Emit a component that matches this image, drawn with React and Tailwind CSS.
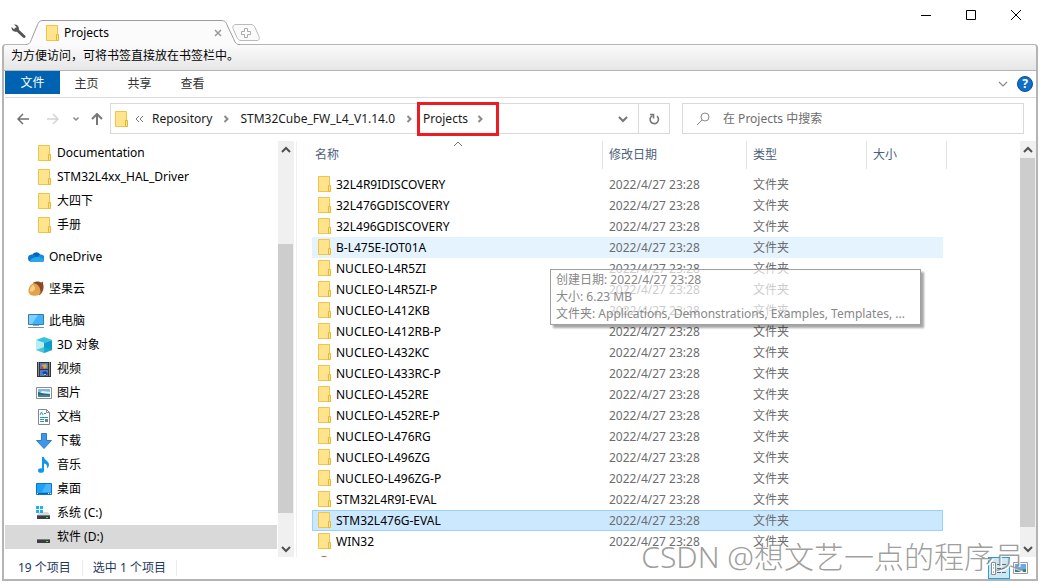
import React, { useState } from "react";

const treeGroups = [
  {
    items: [
      { name: "Documentation", icon: "folder" },
      { name: "STM32L4xx_HAL_Driver", icon: "folder" },
      { name: "大四下", icon: "folder" },
      { name: "手册", icon: "folder" },
    ],
  },
  { root: { name: "OneDrive", icon: "cloud" }, items: [] },
  { root: { name: "坚果云", icon: "nut" }, items: [] },
  {
    root: { name: "此电脑", icon: "pc" },
    items: [
      { name: "3D 对象", icon: "cube" },
      { name: "视频", icon: "video" },
      { name: "图片", icon: "picture" },
      { name: "文档", icon: "document" },
      { name: "下载", icon: "download" },
      { name: "音乐", icon: "music" },
      { name: "桌面", icon: "desktop" },
      { name: "系统 (C:)", icon: "systemDrive" },
      { name: "软件 (D:)", icon: "drive" },
    ],
  },
];

const folders = [
  "32L4R9IDISCOVERY",
  "32L476GDISCOVERY",
  "32L496GDISCOVERY",
  "B-L475E-IOT01A",
  "NUCLEO-L4R5ZI",
  "NUCLEO-L4R5ZI-P",
  "NUCLEO-L412KB",
  "NUCLEO-L412RB-P",
  "NUCLEO-L432KC",
  "NUCLEO-L433RC-P",
  "NUCLEO-L452RE",
  "NUCLEO-L452RE-P",
  "NUCLEO-L476RG",
  "NUCLEO-L496ZG",
  "NUCLEO-L496ZG-P",
  "STM32L4R9I-EVAL",
  "STM32L476G-EVAL",
  "WIN32",
];

function FolderIcon() {
  return (
    <svg width="14" height="16" viewBox="0 0 14 16" className="shrink-0">
      <path d="M.5.5h11v15H.5z" fill="#ffe48d" stroke="#ecc54a" />
      <path d="M10.5 9.5h2v6h-2z" fill="#ffe48d" stroke="#e6b730" />
    </svg>
  );
}

function DriveBody() {
  return (
    <>
      <path d="M3 7h9l2 3H1z" fill="#d9dadc" />
      <path d="M1 10h13v4H1z" fill="#3b3d40" />
      <path d="M1 10h13v1H1z" fill="#77797c" />
      <path d="M10 12h2v1h-2z" fill="#4be04b" />
    </>
  );
}

const treeIcons = {
  cloud: (
    <>
      <path d="M4 7a4.500 4.500 0 0 1 8.500-1L9 11z" fill="#0364b8" />
      <path d="M3.500 13A3.500 3.500 0 0 1 4 5.500c2 0 3 .8 4.500 2.500L6 13z" fill="#0f78d4" />
      <path d="M12 5.500A3.600 3.600 0 0 1 13.500 13L8 9z" fill="#1490df" />
      <path d="M2 13c-1-2.500 4-5 7-5 3 0 6.500 2 7 3.500-.3 1-1 1.500-2 1.500z" fill="#28a8ea" />
    </>
  ),
  nut: (
    <>
      <path d="M5 2c2-2 6-2 8-.5l2-.8v2c1.500 4 0 9-3.500 11.500z" fill="#8a4a26" />
      <path d="M5.500 2.300C9 2.500 13 6 12.500 12c-2 3-7 3.500-10 2C0 12 0 9 1 7c1-2.500 2-4 4.500-4.700z" fill="#e3a24a" />
      <path d="M5 4C3 5 1.500 8 2 10.500c2 1 5-1 5-3C7 6 6.500 4.500 5 4z" fill="#f8cf82" />
    </>
  ),
  pc: (
    <>
      <path d="M.5 1.500h15v10H.5z" fill="#3fb4fb" stroke="#3a7ba8" />
      <path d="M1 2h9L4 11H1z" fill="#7fd0ff" />
      <path d="M5 12h6v1H5z" fill="#8fa9bb" />
      <path d="M0 14h16v1H0z" fill="#6f93ac" />
    </>
  ),
  cube: (
    <>
      <path d="M0 3l8-3 8 3-8 3z" fill="#34c3d8" />
      <path d="M0 3l8 3v10l-8-3z" fill="#b9eef1" />
      <path d="M16 3L8 6v10l8-3z" fill="#0b9bd0" />
      <path d="M8 10l8 3-8 3-8-3z" fill="#22b2cf" opacity=".7" />
    </>
  ),
  video: (
    <>
      <path d="M1 1h14v15H1z" fill="#333" />
      <path d="M4 2h8v6H4zM4 9h8v6H4z" fill="#4c7fd0" />
      <path d="M6 4l4-1 1 3-3 2-2-1z" fill="#d8b02c" />
      <path d="M5 6l2-1 1 3H5z" fill="#c6475a" />
      <path d="M6 11l4-1 2 3-3 2z" fill="#20419a" />
      <path d="M8 13h2v1H8z" fill="#e5c43e" />
      <path d="M2.500 1.500v14M13.500 1.500v14" stroke="#eee" strokeDasharray="1 1" />
    </>
  ),
  picture: (
    <>
      <path d="M.5 2.500h15v11H.5z" fill="#fff" stroke="#8d8d8d" />
      <path d="M2 4h12v8H2z" fill="#7db8ee" />
      <path d="M6 6l8 1v2L4 8z" fill="#e7f2fa" />
      <path d="M2 7c4 1 7 2 12 2v1H2z" fill="#2f6f55" />
      <path d="M2 10h12v2H2z" fill="#3e83ae" />
    </>
  ),
  document: (
    <>
      <path d="M2.500.5h8l3 3v12h-11z" fill="#fff" stroke="#878787" />
      <path d="M10.500.5v3h3" fill="none" stroke="#878787" />
      <path d="M4 6l1.500-3L7 6M8 4.500h2M4 8.500h8M4 10.500h4M4 12.500h4" fill="none" stroke="#2795c9" />
      <path d="M9 10h3v3H9z" fill="#5a9179" />
    </>
  ),
  download: <path d="M5.500.5h5v7h5L8 15.500.5 7.500h5z" fill="#3f95e6" stroke="#2d7ccc" />,
  music: (
    <>
      <ellipse cx="5" cy="13.500" rx="3" ry="2.300" fill="#0f97ec" />
      <path d="M6 0h2c0 3 5 4 5 7.500 0 2-1 3-2 4 .6-3-.5-4.500-3-5V14H6z" fill="#0f97ec" />
    </>
  ),
  desktop: (
    <>
      <path d="M.5 2.500h15v11H.5z" fill="#1ba1fb" stroke="#1173bd" />
      <path d="M10 3h5v8h-9z" fill="#45b5ff" />
      <path d="M1 12h14v1H1z" fill="#0c5d9e" />
      <path d="M1 12h1v1H1zM12 12h1v1h-1zM14 12h1v1h-1z" fill="#fff" />
    </>
  ),
  systemDrive: (
    <>
      <DriveBody />
      <path d="M0 1h3v3H0zM4 1h3v3H4zM0 5h3v3H0zM4 5h3v3H4z" fill="#16b6ea" />
    </>
  ),
  drive: <DriveBody />,
};

function TreeIcon({ name }) {
  if (name === "folder") {
    return (
      <span className="flex w-4 shrink-0 justify-center pl-px">
        <FolderIcon />
      </span>
    );
  }
  return (
    <svg width="16" height="16" viewBox="0 0 16 16" className="shrink-0">
      {treeIcons[name]}
    </svg>
  );
}

function TreeItem({ item, nested, active, onSelect }) {
  return (
    <li>
      <button
        onClick={() => onSelect(item.name)}
        className={`flex h-6 w-full items-center gap-[5px] text-left ${nested ? "pl-[31px]" : "pl-[23px]"} ${
          active ? "bg-[#d9d9d9]" : ""
        }`}
      >
        <TreeIcon name={item.icon} />
        {item.name}
      </button>
    </li>
  );
}

function Chevron({ direction = "down", className = "" }) {
  const paths = {
    down: "M1 3l4 4 4-4",
    up: "M1 7l4-4 4 4",
    right: "M3.500 2L6.500 5 3.500 8",
  };
  return (
    <svg width="10" height="10" viewBox="0 0 10 10" className={className}>
      <path d={paths[direction]} fill="none" stroke="currentColor" strokeWidth="2" />
    </svg>
  );
}

function ScrollBar({ thumb }) {
  return (
    <div className="flex w-4 shrink-0 flex-col bg-[#f0f0f0] text-[#505050]">
      <button aria-label="向上滚动" className="flex h-[17px] items-center justify-center">
        <Chevron direction="up" />
      </button>
      <div className={`flex min-h-0 flex-1 flex-col pr-px ${thumb}`}>
        <div className="min-h-0 flex-1 bg-[#cdcdcd]" />
      </div>
      <button aria-label="向下滚动" className="flex h-[17px] items-center justify-center">
        <Chevron />
      </button>
    </div>
  );
}

function TitleBar() {
  return (
    <header className="relative z-10 flex h-11 shrink-0 justify-between">
      <div className="flex items-end">
        <button aria-label="设置" className="flex h-7 w-6 pl-[9px] pt-[8px]">
          <svg width="15" height="15" viewBox="0 0 15 15" className="shrink-0">
            <path d="M5 5l8 7.500" stroke="#555" strokeWidth="3" strokeLinecap="round" />
            <path d="M3 .5L5.500 3 5 4.800 3 5.200.6 3C.2 5.500 2 7.700 4.300 7.700 7 7.800 8 6 7.900 4 7.700 1.800 5.500 0 3 .5z" fill="#555" />
          </svg>
        </button>
        <div className="relative -mb-px flex h-[25px] w-[214px] items-center pl-[20px] pr-[18px] pt-px">
          <svg width="214" height="25" viewBox="0 0 214 25" className="absolute inset-0">
            <path d="M0 24.500C4 24 4.500 22 6 18L11 6C12.500 2 13.500.5 17 .5h178c4 0 5 1.500 6.500 5.500l6 12.500c1.500 4 2.500 6 6.500 6V25H0z" fill="#fbfbfb" />
            <path d="M0 24.500C4 24 4.500 22 6 18L11 6C12.500 2 13.500.5 17 .5h178c4 0 5 1.500 6.500 5.500l6 12.500c1.500 4 2.500 6 6.500 6" fill="none" stroke="#9c9c9c" />
          </svg>
          <span className="relative flex flex-1 items-center gap-1">
            <FolderIcon />
            Projects
          </span>
          <button aria-label="关闭标签页" className="relative">
            <svg width="8" height="8" viewBox="0 0 8 8">
              <path d="M1 1l6 6M7 1L1 7" stroke="#999" strokeWidth="1.500" />
            </svg>
          </button>
        </div>
        <button aria-label="新建标签页" className="-ml-2 pb-[3px]">
          <svg width="28" height="17" viewBox="0 0 28 17">
            <path d="M4 .5h15c2 0 3 1 4 3l4 9c.8 2.500 0 4-2 4H9c-2 0-3-1-4-3l-4-9C.3 2 1.500.5 4 .5z" fill="#fafafa" stroke="#bbb" />
            <path d="M12.500 4.500h3v3h3v3h-3v3h-3v-3h-3v-3h3z" fill="#fff" stroke="#aaa" />
          </svg>
        </button>
      </div>
      <div className="flex h-[30px]">
        <button aria-label="最小化" className="flex w-[45px] items-center justify-center">
          <svg width="10" height="10" viewBox="0 0 10 10">
            <path d="M0 5.500h10" stroke="#000" />
          </svg>
        </button>
        <button aria-label="最大化" className="flex w-[45px] items-center justify-center">
          <svg width="10" height="10" viewBox="0 0 10 10">
            <path d="M.5.5h9v9h-9z" fill="none" stroke="#000" />
          </svg>
        </button>
        <button aria-label="关闭" className="flex w-[45px] items-center justify-center">
          <svg width="10" height="10" viewBox="0 0 10 10">
            <path d="M0 0l10 10M10 0L0 10" stroke="#000" />
          </svg>
        </button>
      </div>
    </header>
  );
}

function Ribbon() {
  return (
    <nav className="flex h-[27px] shrink-0 items-start border-b border-[#dadbdc] text-[#333]">
      <button className="h-[23px] w-[55px] bg-[#0063b1] text-white">文件</button>
      <button className="h-[25px] w-[53px]">主页</button>
      <button className="h-[25px] w-[53px]">共享</button>
      <button className="h-[25px] w-[53px]">查看</button>
      <div className="ml-auto flex h-[26px] items-center gap-[9px] pr-[3px]">
        <button aria-label="展开功能区" className="text-[#888]">
          <svg width="10" height="10" viewBox="0 0 10 10">
            <path d="M1 3l4 4 4-4" fill="none" stroke="currentColor" strokeWidth="1.200" />
          </svg>
        </button>
        <button
          aria-label="帮助"
          className="flex size-4 items-center justify-center rounded-full border border-[#0a4f94] bg-[#0f6fc9] text-[12px] font-bold leading-none text-white"
        >
          ?
        </button>
      </div>
    </nav>
  );
}

function AddressRow() {
  return (
    <div className="flex h-[43px] shrink-0 pr-[12px] pt-[5px]">
      <div className="mr-[3px] flex h-[31px] items-center">
        <button aria-label="后退" className="flex w-9 justify-center">
          <svg width="12" height="12" viewBox="0 0 12 12">
            <path d="M12 6H1M6 1L1 6l5 5" fill="none" stroke="#707070" strokeWidth="1.500" />
          </svg>
        </button>
        <button aria-label="前进" className="flex w-6 justify-center">
          <svg width="12" height="12" viewBox="0 0 12 12">
            <path d="M0 6h11M6 1l5 5-5 5" fill="none" stroke="#d4d4d4" strokeWidth="1.500" />
          </svg>
        </button>
        <button aria-label="最近浏览的位置" className="flex w-[22px] justify-center">
          <svg width="8" height="8" viewBox="0 0 8 8">
            <path d="M1.500 2.500L4 5l2.500-2.500" fill="none" stroke="#888" strokeWidth="1.500" />
          </svg>
        </button>
        <button aria-label="向上" className="flex w-5 justify-center">
          <svg width="12" height="12" viewBox="0 0 12 12">
            <path d="M6 12V1M1 6l5-5 5 5" fill="none" stroke="#777" strokeWidth="2" />
          </svg>
        </button>
      </div>

      <div className="flex h-[31px] min-w-0 flex-1 items-center border border-[#d9d9d9] pl-1 text-[#1a1a1a]">
        <FolderIcon />
        <svg width="9" height="8" viewBox="0 0 9 8" className="ml-[6px] mr-[8px]">
          <path d="M4 1L1 4l3 3M8 1L5 4l3 3" fill="none" stroke="#777" />
        </svg>
        <button>Repository</button>
        <Chevron direction="right" className="mx-[9px] text-[#8a8a8a]" />
        <button>STM32Cube_FW_L4_V1.14.0</button>
        <Chevron direction="right" className="mx-[9px] text-[#8a8a8a]" />
        <div className="relative flex items-center">
          <button>Projects</button>
          <Chevron direction="right" className="ml-[7px] text-[#8a8a8a]" />
          <span className="absolute -inset-y-[9px] -left-[6px] -right-[14px] border-[3px] border-[#ed1c24]" />
        </div>
        <button aria-label="以前的位置" className="ml-auto flex w-[30px] justify-center text-[#777]">
          <Chevron />
        </button>
        <button aria-label="刷新" className="flex h-full w-[31px] items-center justify-center border-l border-[#d9d9d9]">
          <svg width="12" height="12" viewBox="0 0 12 12">
            <path d="M9 3.200A4.200 4.200 0 1 1 4.500 2.600" fill="none" stroke="#777" strokeWidth="1.600" />
            <path d="M2 1.500h3.500V5.500" fill="none" stroke="#777" strokeWidth="1.600" />
          </svg>
        </button>
      </div>

      <label className="ml-[12px] flex h-[31px] w-[342px] items-center border border-[#d9d9d9] pl-[13px]">
        <svg width="14" height="14" viewBox="0 0 14 14" className="mr-[13px]">
          <circle cx="9" cy="5" r="4" fill="none" stroke="#8a8a8a" />
          <path d="M6 8l-5 5" stroke="#8a8a8a" />
        </svg>
        <input
          aria-label="搜索"
          placeholder="在 Projects 中搜索"
          className="min-w-0 flex-1 outline-none placeholder:text-[#6d6d6d]"
        />
      </label>
    </div>
  );
}

function FileTable({ selected, onSelect }) {
  const rowStyle = (name) => {
    if (name === selected) return "border-y border-[#99d1ff] bg-[#cce8ff] first:border-l nth-4:border-r";
    if (name === "B-L475E-IOT01A") return "bg-[#e5f3ff]";
    return "";
  };

  return (
    <table className="w-[635px] table-fixed border-separate border-spacing-0 text-left">
      <colgroup>
        <col className="w-[291px]" />
        <col className="w-[144px]" />
        <col className="w-[120px]" />
        <col className="w-[76px]" />
        <col className="w-1" />
      </colgroup>
      <thead className="text-[#4c607a]">
        <tr className="h-[33px] align-top">
          <th className="relative p-0 font-normal">
            <span className="block h-7 border-r border-[#e2e2e2] pl-[3px] leading-7">名称</span>
            <svg width="10" height="6" viewBox="0 0 10 6" className="absolute inset-x-0 top-0 mx-auto">
              <path d="M1 5l4-4 4 4" fill="none" stroke="#777" />
            </svg>
          </th>
          <th className="p-0 font-normal">
            <span className="block h-7 border-r border-[#e2e2e2] pl-[6px] leading-7">修改日期</span>
          </th>
          <th className="p-0 font-normal">
            <span className="block h-7 border-r border-[#e2e2e2] pl-[6px] leading-7">类型</span>
          </th>
          <th colSpan={2} className="p-0 font-normal">
            <span className="block h-7 border-r border-[#e2e2e2] pl-[6px] leading-7">大小</span>
          </th>
        </tr>
      </thead>
      <tbody className="text-[#6d6d6d]">
        {folders.map((name) => (
          <tr key={name} onClick={() => onSelect(name)} className="h-[21px]">
            <td className={`p-0 ${rowStyle(name)}`}>
              <span className={`flex items-start gap-1 leading-[18px] text-black ${name === selected ? "pl-[5px]" : "pl-[6px]"}`}>
                <FolderIcon />
                {name}
              </span>
            </td>
            <td className={`p-0 pl-[6px] leading-[18px] ${rowStyle(name)}`}>2022/4/27 23:28</td>
            <td className={`p-0 pl-[6px] leading-[18px] ${rowStyle(name)}`}>文件夹</td>
            <td className={`p-0 ${rowStyle(name)}`} />
            <td className="p-0" />
          </tr>
        ))}
        <tr className="h-[21px]">
          <td colSpan={5} className="p-0 pl-[6px]">
            <svg width="12" height="14" viewBox="0 0 12 14">
              <circle cx="6" cy="6" r="6" fill="#c94f4a" />
            </svg>
          </td>
        </tr>
      </tbody>
    </table>
  );
}

function StatusBar() {
  return (
    <footer className="flex h-[22px] shrink-0 items-center pl-[13px] text-[#1e395b]">
      <span className="border-r border-[#ececec] pr-[11px] leading-4">19 个项目</span>
      <span className="border-r border-[#ececec] px-[10px] leading-4">选中 1 个项目</span>
      <div className="ml-auto flex h-full items-center gap-[3px] pr-2">
        <button aria-label="详细信息" className="flex h-[22px] w-[22px] items-center justify-center border border-[#26a0da] bg-[#cbe8f6]">
          <svg width="16" height="13" viewBox="0 0 16 13">
            <path d="M.5.500h4v12h-4z" fill="#fff" stroke="#8c8c8c" />
            <path d="M2 3h1M2 6h1" stroke="#3d7fc1" />
            <path d="M2 10h1" stroke="#d04040" />
            <path d="M6 2.500h4M11 2.500h4M6 6.500h4M11 6.500h4M6 10.500h4M11 10.500h4" stroke="#666" />
          </svg>
        </button>
        <button aria-label="大图标">
          <svg width="15" height="12" viewBox="0 0 15 12">
            <path d="M.5.500h14v11H.5z" fill="#fff" stroke="#999" />
            <path d="M2 2h11v8H2z" fill="#6fa8e8" />
            <path d="M2 6l5 2 6-1v3H2z" fill="#3d7d77" />
          </svg>
        </button>
      </div>
    </footer>
  );
}

export default function App() {
  const [place, setPlace] = useState("软件 (D:)");
  const [selected, setSelected] = useState("STM32L476G-EVAL");

  return (
    <div className="relative flex h-screen flex-col overflow-hidden bg-white px-[2px] pb-[2px] font-['Noto_Sans','Noto_Sans_CJK_SC',sans-serif] text-[12px] leading-4 text-black">
      <TitleBar />

      <div className="flex min-h-0 flex-1 flex-col rounded-t border-x-2 border-b-2 border-t border-[#b4b4b4] bg-white">
        <div className="flex h-[26px] shrink-0 items-center rounded-t border-b border-[#b4b4bb] bg-linear-to-b from-[#fbfbfb] to-[#e6e6e6] pb-1 pl-[7px]">
          为方便访问，可将书签直接放在书签栏中。
        </div>

        <div className="flex min-h-0 flex-1 flex-col pl-px">
          <Ribbon />
          <AddressRow />

          <div className="flex min-h-0 flex-1">
            <aside className="flex w-[292px] shrink-0 border-r border-[#f0f0f0] pr-[2px]">
              <nav className="min-w-0 flex-1 overflow-hidden pr-px">
                {treeGroups.map((group, i) => (
                  <ul key={i} className="mb-2">
                    {group.root && (
                      <TreeItem item={group.root} active={place === group.root.name} onSelect={setPlace} />
                    )}
                    {group.items.map((item) => (
                      <TreeItem key={item.name} item={item} nested active={place === item.name} onSelect={setPlace} />
                    ))}
                  </ul>
                ))}
              </nav>
              <ScrollBar thumb="pt-[86px] pb-[27px]" />
            </aside>

            <main className="relative min-w-0 flex-1 overflow-hidden pl-[15px]">
              <FileTable selected={selected} onSelect={setSelected} />
              <div
                role="tooltip"
                className="absolute left-[253px] top-[128px] w-[371px] border border-[#a0a0a0] bg-white/65 pb-[2px] pl-[5px] pt-px leading-[17px] text-[#888] shadow-[3px_3px_2px_rgba(0,0,0,0.35)]"
              >
                <p>创建日期: 2022/4/27 23:28</p>
                <p>大小: 6.23 MB</p>
                <p>文件夹: Applications, Demonstrations, Examples, Templates, ...</p>
              </div>
            </main>
            <ScrollBar thumb="pb-[13px]" />
          </div>

          <StatusBar />
        </div>
      </div>

      <div className="pointer-events-none absolute bottom-[8px] right-4 text-[30px] font-light leading-9 text-[#858585]/80 [text-shadow:1px_1px_0_#fff]">
        CSDN @想文艺一点的程序员
      </div>
    </div>
  );
}
